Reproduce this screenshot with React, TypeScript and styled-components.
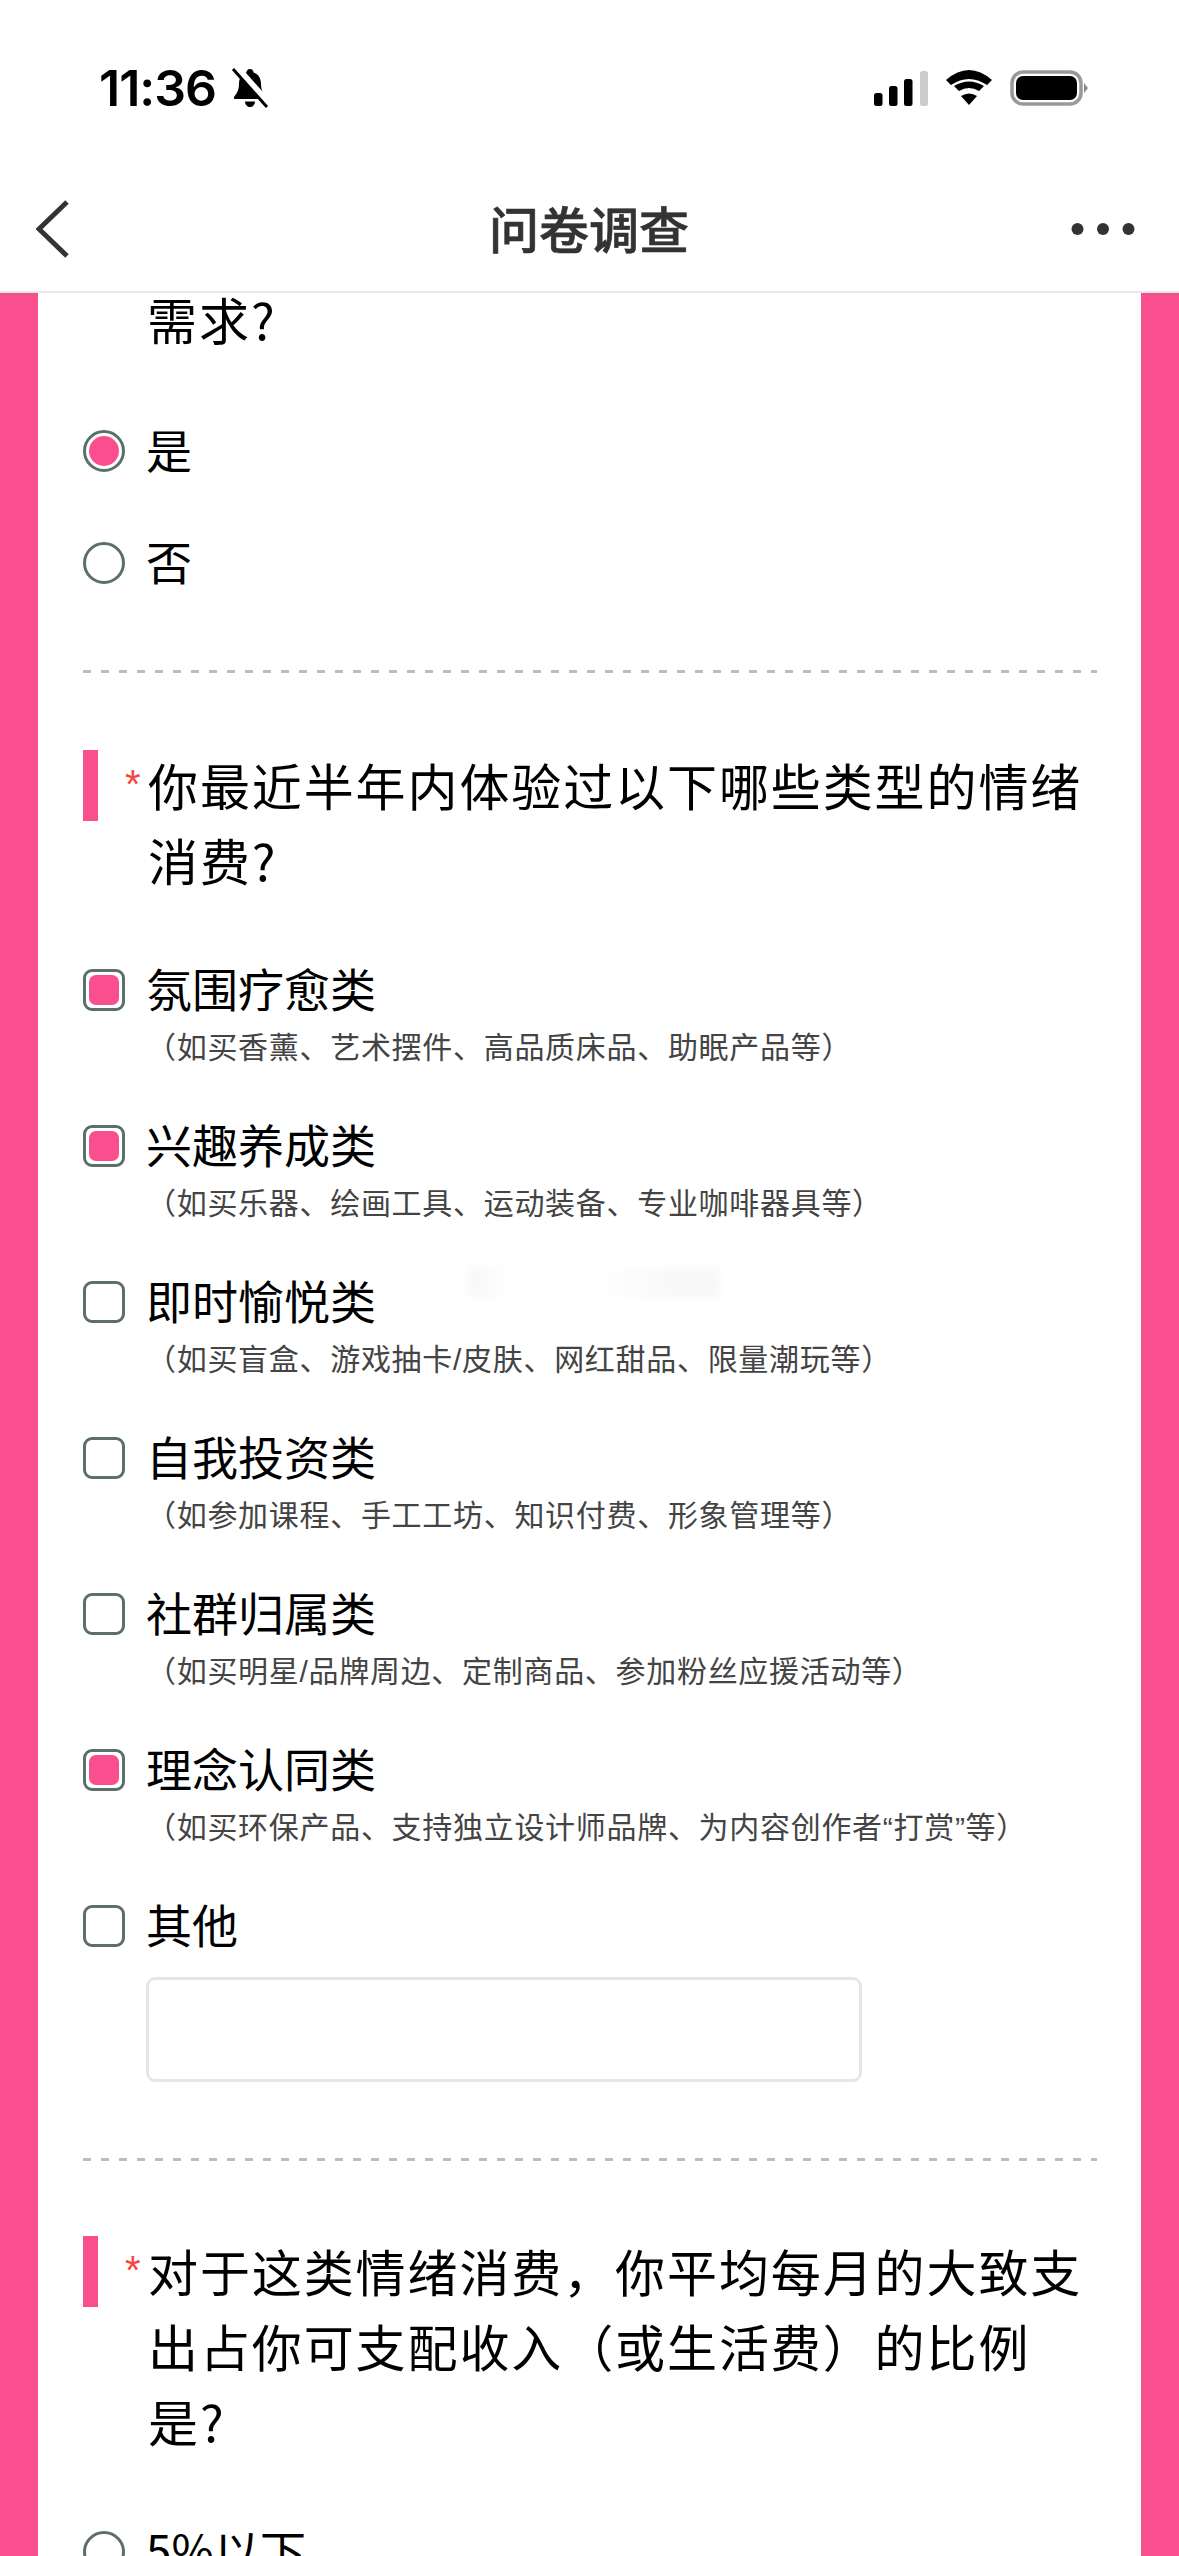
import React from "react";
import styled, { createGlobalStyle } from "styled-components";

const PINK = "#f94f8f";
const RING = "#5c706a";

const GlobalStyle = createGlobalStyle`
  html, body {
    margin: 0;
    padding: 0;
    background: #fff;
  }
  body {
    font-family: "Noto Sans CJK SC", "Liberation Sans", sans-serif;
  }
`;

const Page = styled.div`
  width: 1179px;
  height: 2556px;
  overflow: hidden;
  display: flex;
  flex-direction: column;
`;

const TopBar = styled.header`
  height: 293px;
  flex: none;
  box-sizing: border-box;
  border-bottom: 2px solid #e8e8e8;
  background: #fff;
  display: flex;
  flex-direction: column;
`;

const StatusBar = styled.div`
  height: 68px;
  margin-top: 54px;
  padding: 0 91px 0 99px;
  display: flex;
  align-items: center;
  justify-content: space-between;
`;

const Clock = styled.div`
  display: flex;
  align-items: center;
  gap: 15px;
  font-family: "Inter", "Liberation Sans", sans-serif;
  font-size: 50px;
  font-weight: 600;
  letter-spacing: -1px;
  color: #000;
`;

const StatusIcons = styled.div`
  display: flex;
  align-items: center;
  gap: 18px;
`;

const NavBar = styled.div`
  margin-top: 75px;
  height: 60px;
  padding: 0 44px 0 36px;
  display: grid;
  grid-template-columns: 1fr auto 1fr;
  align-items: center;
  & > svg:last-child {
    justify-self: end;
  }
`;

const NavTitle = styled.div`
  font-size: 50px;
  font-weight: 500;
  line-height: 60px;
  padding: 0 0 3px 7px;
  color: #333;
  -webkit-text-stroke: 0.7px #333;
`;

const Body = styled.main`
  flex: 1;
  background: ${PINK};
  padding: 0 38px;
  min-height: 0;
`;

const Sheet = styled.div`
  background: #fff;
  height: 100%;
  overflow: hidden;
  padding: 0 44px 0 45px;
`;

const Tail = styled.div`
  padding-left: 64px;
  font-size: 50px;
  letter-spacing: 2px;
  line-height: 50px;
  color: #000;
`;

const RadioList = styled.div`
  margin-top: 73px;
  display: flex;
  flex-direction: column;
  gap: 42px;
`;

const RadioRow = styled.div`
  height: 70px;
  display: flex;
  align-items: center;
  gap: 21px;
`;

const Radio = styled.span<{ $on?: boolean }>`
  width: 42px;
  height: 42px;
  flex: none;
  box-sizing: border-box;
  border: 3px solid ${RING};
  border-radius: 50%;
  padding: 3px;
  background: ${(p) => (p.$on ? PINK : "#fff")};
  background-clip: content-box;
`;

const Check = styled.span<{ $on?: boolean }>`
  width: 42px;
  height: 42px;
  flex: none;
  box-sizing: border-box;
  border: 3px solid ${RING};
  border-radius: 9px;
  background: #fff;
  padding: 3px;
  display: block;
  &::after {
    content: "";
    display: block;
    width: 100%;
    height: 100%;
    border-radius: 7px;
    background: ${(p) => (p.$on ? PINK : "transparent")};
  }
`;

const Label = styled.span`
  font-size: 46px;
  line-height: 64px;
  padding-bottom: 6px;
  color: #000;
`;

const Divider = styled.hr<{ $top: number }>`
  margin: ${(p) => p.$top}px 0 0;
  height: 3px;
  border: 0;
  background: repeating-linear-gradient(
    90deg,
    #bdbdbd 0 8px,
    transparent 8px 18px
  );
`;

const Question = styled.div<{ $top: number }>`
  margin-top: ${(p) => p.$top}px;
  display: flex;
  min-height: 71px;
`;

const QuestionBar = styled.span`
  width: 15px;
  height: 71px;
  flex: none;
  background: ${PINK};
`;

const Star = styled.span`
  width: 23px;
  margin-left: 27px;
  flex: none;
  font-family: "Liberation Sans", sans-serif;
  font-size: 40px;
  line-height: 68px;
  color: #f4483f;
`;

const QuestionText = styled.div`
  font-size: 50px;
  letter-spacing: 1.9px;
  line-height: 75px;
  margin-top: -3px;
  margin-bottom: 2px;
  color: #000;
  width: 950px;
`;

const Options = styled.div`
  margin-top: 56px;
  display: flex;
  flex-direction: column;
`;

const Option = styled.div`
  height: 156px;
  display: grid;
  grid-template-columns: 42px 1fr;
  column-gap: 21px;
  grid-template-rows: 70px auto;
  align-items: center;
  align-content: start;
`;

const Note = styled.div`
  grid-column: 2;
  font-family: "Liberation Sans", "Noto Sans CJK SC", sans-serif;
  font-size: 30px;
  letter-spacing: 0.7px;
  line-height: 42px;
  padding-top: 2px;
  color: #444;
`;

const OtherOption = styled(Option)`
  height: auto;
`;

const OtherInput = styled.div`
  grid-column: 2;
  margin-top: 16px;
  width: 716px;
  height: 105px;
  box-sizing: border-box;
  border: 3px solid #e6e6e6;
  border-radius: 9px;
`;

const Smudge = styled.div`
  position: absolute;
  left: 468px;
  top: 1268px;
  width: 252px;
  height: 30px;
  background: linear-gradient(90deg, #f9f9f9 0 6%, #fefefe 15%, #fff 50%, #f8f8f8 85% 100%);
  filter: blur(3px);
`;

const LastOptions = styled.div`
  margin-top: 57px;
`;

const Signal = () => (
  <svg width="54" height="35" viewBox="0 0 54 35">
    <rect x="0" y="22" width="8.500" height="13" rx="2.500" fill="#000" />
    <rect x="15" y="15" width="8.500" height="20" rx="2.500" fill="#000" />
    <rect x="30" y="8" width="8.500" height="27" rx="2.500" fill="#000" />
    <rect x="46" y="0" width="8" height="35" rx="2.500" fill="#ccc" />
  </svg>
);

const Wifi = () => (
  <svg width="46" height="36" viewBox="0 0 46 36">
    <path d="M0 10Q23 -10 46 10L41 15Q23 3 5 15Z" fill="#000" />
    <path d="M8 16Q23 7 38 16L33 21Q23 15 13 21Z" fill="#000" />
    <path d="M15 26Q23 21 31 26L23 35Z" fill="#000" />
  </svg>
);

const Battery = () => (
  <svg width="78" height="36" viewBox="0 0 78 36">
    <rect x="2" y="2" width="69" height="32" rx="11" fill="none" stroke="#999" strokeWidth="3.500" />
    <rect x="6" y="6" width="61" height="24" rx="7" fill="#000" />
    <path d="M74 13L78 18L74 23Z" fill="#888" />
  </svg>
);

const MutedBell = () => (
  <svg width="38" height="40" viewBox="0 0 38 40">
    <path
      d="M19 1C21 1 22.500 2.500 22.500 4.500C28 6 30 11 30 16C30 22 32 25 35 29L35 31L3 31L3 29C6 25 8 22 8 16C8 11 10 6 15.500 4.500C15.500 2.500 17 1 19 1Z"
      fill="#000"
    />
    <path d="M14 33.500L24 33.500C24 37 21.500 39 19 39C16.500 39 14 37 14 33.500Z" fill="#000" />
    <path d="M5 -1L38 36" stroke="#fff" strokeWidth="7" />
    <path d="M2 1L36 39" stroke="#000" strokeWidth="3" />
  </svg>
);

const BackArrow = () => (
  <svg width="34" height="58" viewBox="0 0 34 58">
    <path d="M31 2L3 29L31 56" fill="none" stroke="#333" strokeWidth="5" />
  </svg>
);

const MoreDots = () => (
  <svg width="64" height="14" viewBox="0 0 64 14">
    <circle cx="6.500" cy="7" r="6" fill="#333" />
    <circle cx="32" cy="7" r="6" fill="#333" />
    <circle cx="57.500" cy="7" r="6" fill="#333" />
  </svg>
);

const options = [
  { title: "氛围疗愈类", note: "（如买香薰、艺术摆件、高品质床品、助眠产品等）", on: true },
  { title: "兴趣养成类", note: "（如买乐器、绘画工具、运动装备、专业咖啡器具等）", on: true },
  { title: "即时愉悦类", note: "（如买盲盒、游戏抽卡/皮肤、网红甜品、限量潮玩等）", on: false },
  { title: "自我投资类", note: "（如参加课程、手工工坊、知识付费、形象管理等）", on: false },
  { title: "社群归属类", note: "（如买明星/品牌周边、定制商品、参加粉丝应援活动等）", on: false },
  { title: "理念认同类", note: "（如买环保产品、支持独立设计师品牌、为内容创作者“打赏”等）", on: true },
];

export default function App() {
  return (
    <Page>
      <GlobalStyle />
      <TopBar>
        <StatusBar>
          <Clock>
            11:36
            <MutedBell />
          </Clock>
          <StatusIcons>
            <Signal />
            <Wifi />
            <Battery />
          </StatusIcons>
        </StatusBar>
        <NavBar>
          <BackArrow />
          <NavTitle>问卷调查</NavTitle>
          <MoreDots />
        </NavBar>
      </TopBar>
      <Body>
        <Sheet>
          <Tail>需求?</Tail>
          <RadioList>
            <RadioRow>
              <Radio $on />
              <Label>是</Label>
            </RadioRow>
            <RadioRow>
              <Radio />
              <Label>否</Label>
            </RadioRow>
          </RadioList>
          <Divider $top={72} />
          <Question $top={77}>
            <QuestionBar />
            <Star>*</Star>
            <QuestionText>你最近半年内体验过以下哪些类型的情绪消费?</QuestionText>
          </Question>
          <Options>
            {options.map((o) => (
              <Option key={o.title}>
                <Check $on={o.on} />
                <Label>{o.title}</Label>
                <Note>{o.note}</Note>
              </Option>
            ))}
            <OtherOption>
              <Check />
              <Label>其他</Label>
              <OtherInput />
            </OtherOption>
          </Options>
          <Divider $top={76} />
          <Question $top={75}>
            <QuestionBar />
            <Star>*</Star>
            <QuestionText>对于这类情绪消费，你平均每月的大致支出占你可支配收入（或生活费）的比例是?</QuestionText>
          </Question>
          <LastOptions>
            <RadioRow>
              <Radio />
              <Label>5%以下</Label>
            </RadioRow>
          </LastOptions>
        </Sheet>
      </Body>
      <Smudge />
    </Page>
  );
}
